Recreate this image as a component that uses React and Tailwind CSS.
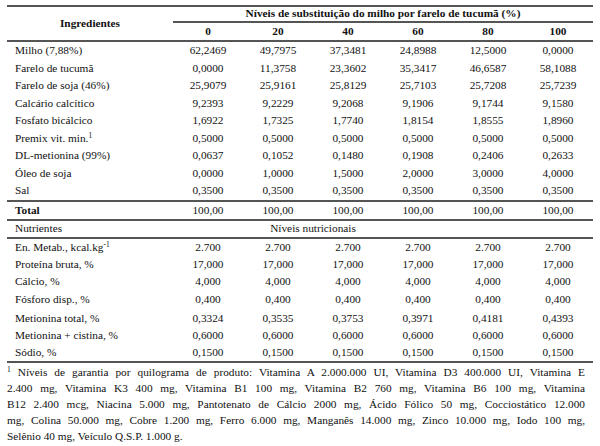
const ingredientes = [
  { name: "Milho (7,88%)", v: ["62,2469", "49,7975", "37,3481", "24,8988", "12,5000", "0,0000"] },
  { name: "Farelo de tucumã", v: ["0,0000", "11,3758", "23,3602", "35,3417", "46,6587", "58,1088"] },
  { name: "Farelo de soja (46%)", v: ["25,9079", "25,9161", "25,8129", "25,7103", "25,7208", "25,7239"] },
  { name: "Calcário calcítico", v: ["9,2393", "9,2229", "9,2068", "9,1906", "9,1744", "9,1580"] },
  { name: "Fosfato bicálcico", v: ["1,6922", "1,7325", "1,7740", "1,8154", "1,8555", "1,8960"] },
  { name: "Premix vit. min.", sup: "1", v: ["0,5000", "0,5000", "0,5000", "0,5000", "0,5000", "0,5000"] },
  { name: "DL-metionina (99%)", v: ["0,0637", "0,1052", "0,1480", "0,1908", "0,2406", "0,2633"] },
  { name: "Óleo de soja", v: ["0,0000", "1,0000", "1,5000", "2,0000", "3,0000", "4,0000"] },
  { name: "Sal", v: ["0,3500", "0,3500", "0,3500", "0,3500", "0,3500", "0,3500"] },
];

const nutrientes = [
  { name: "En. Metab., kcal.kg", sup: "-1", h: "h-[17px]", v: ["2.700", "2.700", "2.700", "2.700", "2.700", "2.700"] },
  { name: "Proteína bruta, %", h: "h-[17px]", v: ["17,000", "17,000", "17,000", "17,000", "17,000", "17,000"] },
  { name: "Cálcio, %", h: "h-[17px]", v: ["4,000", "4,000", "4,000", "4,000", "4,000", "4,000"] },
  { name: "Fósforo disp., %", h: "h-[20px]", v: ["0,400", "0,400", "0,400", "0,400", "0,400", "0,400"] },
  { name: "Metionina total, %", h: "h-[17px]", v: ["0,3324", "0,3535", "0,3753", "0,3971", "0,4181", "0,4393"] },
  { name: "Metionina + cistina, %", h: "h-[17px]", v: ["0,6000", "0,6000", "0,6000", "0,6000", "0,6000", "0,6000"] },
  { name: "Sódio, %", h: "h-[17px]", v: ["0,1500", "0,1500", "0,1500", "0,1500", "0,1500", "0,1500"] },
];

const niveis = ["0", "20", "40", "60", "80", "100"];

// linhas da nota de rodapé, quebradas como no original
const nota = [
  "Níveis de garantia por quilograma de produto: Vitamina A 2.000.000 UI, Vitamina D3 400.000 UI, Vitamina E",
  "2.400 mg, Vitamina K3 400 mg, Vitamina B1 100 mg, Vitamina B2 760 mg, Vitamina B6 100 mg, Vitamina",
  "B12 2.400 mcg, Niacina 5.000 mg, Pantotenato de Cálcio 2000 mg, Ácido Fólico 50 mg, Cocciostático 12.000",
  "mg, Colina 50.000 mg, Cobre 1.200 mg, Ferro 6.000 mg, Manganês 14.000 mg, Zinco 10.000 mg, Iodo 100 mg,",
];

function Sup({ children }) {
  return <span className="relative -top-[4px] text-[7.5px] leading-none">{children}</span>;
}

function Row({ name, sup, v, h = "h-[17.5px]" }) {
  return (
    <div className={`grid grid-cols-[166px_repeat(6,1fr)] items-center ${h}`}>
      <div className="pl-2 whitespace-nowrap">
        {name}
        {sup && <Sup>{sup}</Sup>}
      </div>
      {v.map((x, i) => (
        <div key={i} className="text-center">{x}</div>
      ))}
    </div>
  );
}

export default function App() {
  return (
    <div className="w-[600px] h-[446px] bg-white overflow-hidden text-[#111] text-[11.3px] leading-none font-['Liberation_Serif','Times_New_Roman',serif]">
      <div className="w-[586px] ml-[7px] mt-[5px]">
        {/* cabeçalho */}
        <div className="grid grid-cols-[166px_1fr] border-t-2 border-b-2 border-[#555]">
          <div className="flex items-center justify-center font-bold">Ingredientes</div>
          <div>
            <div className="h-[16px] flex items-center justify-center font-bold border-b-2 border-[#555]">
              Níveis de substituição do milho por farelo de tucumã (%)
            </div>
            <div className="h-[17px] grid grid-cols-6 items-center font-bold">
              {niveis.map((n) => (
                <div key={n} className="text-center">{n}</div>
              ))}
            </div>
          </div>
        </div>

        {ingredientes.map((r) => (
          <Row key={r.name} {...r} />
        ))}

        <div className="border-t-2 border-b-2 border-[#555]">
          <div className="grid grid-cols-[166px_repeat(6,1fr)] items-center h-[17.5px]">
            <div className="pl-2 font-bold">Total</div>
            {niveis.map((n) => (
              <div key={n} className="text-center">100,00</div>
            ))}
          </div>
        </div>

        <div className="grid grid-cols-[166px_repeat(6,1fr)] items-center h-[18px] border-b-2 border-[#555]">
          <div className="pl-2">Nutrientes</div>
          <div className="col-span-4 text-center">Níveis nutricionais</div>
        </div>

        {nutrientes.map((r) => (
          <Row key={r.name} {...r} />
        ))}

        <div className="border-t-2 border-[#555]" />
      </div>

      <div className="w-[578px] ml-[7px] leading-[16px] pt-[1px]">
        {nota.map((l, i) => (
          <div key={i} className="text-justify [text-align-last:justify] whitespace-nowrap">
            {i === 0 && <Sup>1</Sup>}
            {i === 0 && " "}
            {l}
          </div>
        ))}
        <div>Selênio 40 mg, Veículo Q.S.P. 1.000 g.</div>
      </div>
    </div>
  );
}
